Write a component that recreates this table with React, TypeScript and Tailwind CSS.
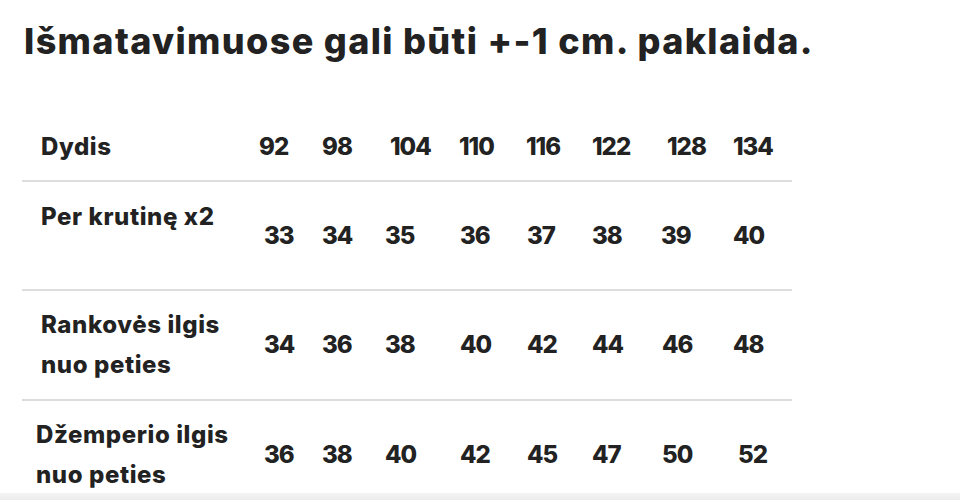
import React from "react";

const font = { fontFamily: "Inter, 'Noto Sans', sans-serif" };

type Row = {
  label: React.ReactNode;
  labelClass: string;
  values: { v: string; c: string }[];
  rowClass: string;
};

const header = [
  { v: "92", c: "" },
  { v: "98", c: "" },
  { v: "104", c: "pl-[5px]" },
  { v: "110", c: "" },
  { v: "116", c: "" },
  { v: "122", c: "" },
  { v: "128", c: "pl-[6px]" },
  { v: "134", c: "" },
];

const rows: Row[] = [
  {
    label: "Per krutinę x2",
    labelClass: "pl-[19px] self-start pt-[15px]",
    rowClass: "h-[109px]",
    values: [
      { v: "33", c: "pl-[5px]" },
      { v: "34", c: "" },
      { v: "35", c: "" },
      { v: "36", c: "pl-[1px]" },
      { v: "37", c: "pl-[1px]" },
      { v: "38", c: "" },
      { v: "39", c: "" },
      { v: "40", c: "" },
    ],
  },
  {
    label: (
      <>
        Rankovės ilgis
        <br />
        nuo peties
      </>
    ),
    labelClass: "pl-[19px]",
    rowClass: "h-[110px]",
    values: [
      { v: "34", c: "pl-[5px]" },
      { v: "36", c: "" },
      { v: "38", c: "" },
      { v: "40", c: "pl-[1px]" },
      { v: "42", c: "pl-[1px]" },
      { v: "44", c: "" },
      { v: "46", c: "pl-[1px]" },
      { v: "48", c: "" },
    ],
  },
  {
    label: (
      <>
        Džemperio ilgis
        <br />
        nuo peties
      </>
    ),
    labelClass: "pl-[14px]",
    rowClass: "h-[110px]",
    values: [
      { v: "36", c: "pl-[5px]" },
      { v: "38", c: "" },
      { v: "40", c: "" },
      { v: "42", c: "pl-[1px]" },
      { v: "45", c: "pl-[1px]" },
      { v: "47", c: "" },
      { v: "50", c: "pl-[1px]" },
      { v: "52", c: "pl-[5px]" },
    ],
  },
];

const cols =
  "grid grid-cols-[237px_63px_63px_74px_67px_66px_69px_72px_59px] items-center";

export default function App() {
  return (
    <div
      className="relative h-[500px] w-[960px] overflow-hidden bg-white text-[#222222]"
      style={font}
    >
      <h1 className="pl-[24px] pt-[19px] text-[36px] font-extrabold leading-[44px] tracking-[1.35px]">
        Išmatavimuose gali būti +-1 cm. paklaida.
      </h1>
      <div className="ml-[22px] mt-[50px] w-[770px] text-[24px] font-extrabold leading-[40px]">
        <div className={`${cols} h-[69px] border-b-2 border-[#dddddd]`}>
          <div className="pl-[19px] tracking-[0.6px]">Dydis</div>
          {header.map((h) => (
            <div key={h.v} className={`${h.c} tracking-[-1px]`}>
              {h.v}
            </div>
          ))}
        </div>
        {rows.map((r, i) => (
          <div key={i} className={`${cols} ${r.rowClass} border-b-2 border-[#dddddd]`}>
            <div className={`${r.labelClass} tracking-[0.6px]`}>{r.label}</div>
            {r.values.map((v, j) => (
              <div key={j} className={`${v.c} tracking-[-1px]`}>
                {v.v}
              </div>
            ))}
          </div>
        ))}
      </div>
      <div className="absolute bottom-0 left-0 h-[7px] w-full bg-gradient-to-b from-[#f4f4f4] to-[#ececec]" />
    </div>
  );
}
